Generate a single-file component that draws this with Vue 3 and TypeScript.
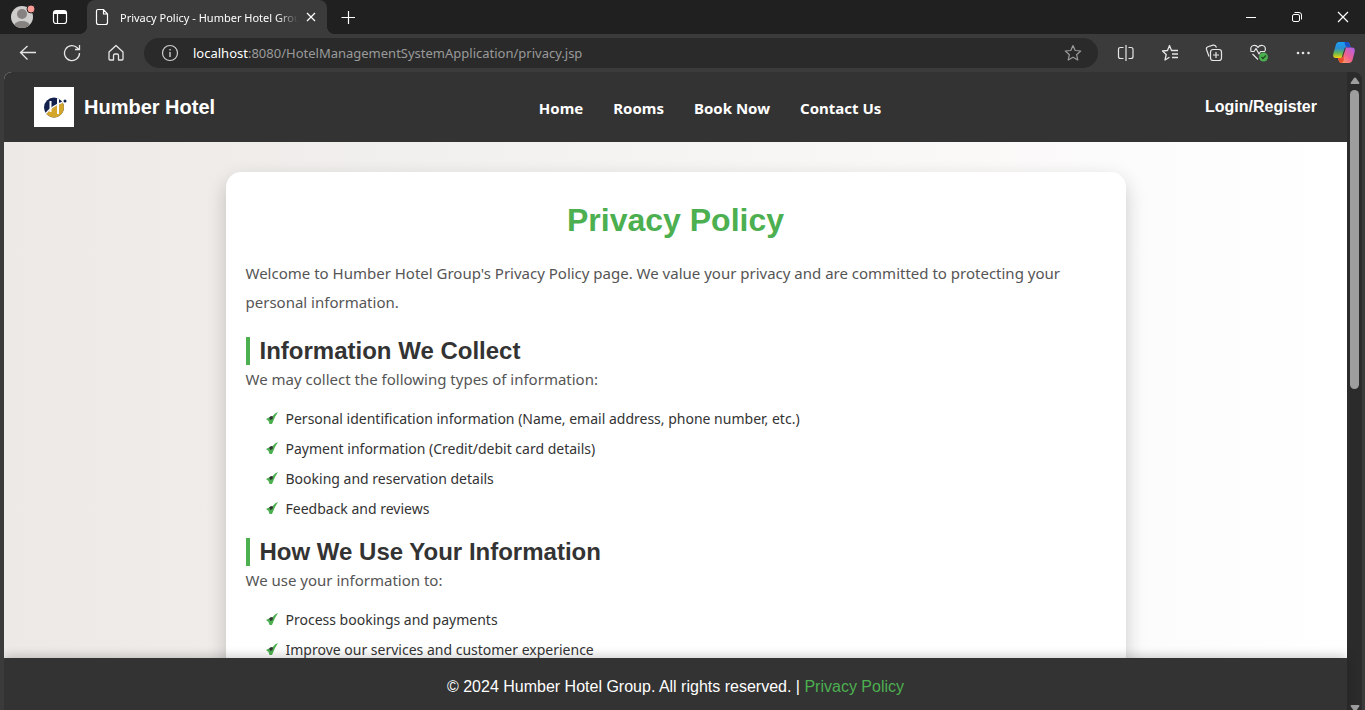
<script setup lang="ts">
interface PolicySection {
  title: string
  intro: string
  items: string[]
}

const navLinks: string[] = ['Home', 'Rooms', 'Book Now', 'Contact Us']

const sections: PolicySection[] = [
  {
    title: 'Information We Collect',
    intro: 'We may collect the following types of information:',
    items: [
      'Personal identification information (Name, email address, phone number, etc.)',
      'Payment information (Credit/debit card details)',
      'Booking and reservation details',
      'Feedback and reviews',
    ],
  },
  {
    title: 'How We Use Your Information',
    intro: 'We use your information to:',
    items: ['Process bookings and payments', 'Improve our services and customer experience'],
  },
]
</script>

<template>
  <div class="window">
    <div class="titlebar">
      <button class="icon-btn profile" aria-label="Profile">
        <svg width="26" height="26" viewBox="0 0 26 26">
          <defs><clipPath id="avatar"><circle cx="12" cy="13" r="11" /></clipPath></defs>
          <g clip-path="url(#avatar)">
            <rect width="26" height="26" fill="#cfcdcb" />
            <circle cx="12" cy="10" r="5" fill="#85827f" />
            <ellipse cx="12" cy="22" rx="8" ry="5" fill="#85827f" />
          </g>
          <circle cx="21" cy="5" r="4" fill="#ff9c96" stroke="#222" stroke-width="1" />
        </svg>
      </button>
      <button class="icon-btn workspaces" aria-label="Tab actions">
        <svg width="16" height="16" viewBox="0 0 16 16" fill="none" stroke="#fff" stroke-width="1.200">
          <rect x="1.500" y="1.500" width="13" height="13" rx="2.500" />
          <path d="M2 3.500H14" stroke-width="3" />
          <path d="M5.500 5V14.500" />
        </svg>
      </button>
      <div class="tab">
        <svg width="14" height="18" viewBox="0 0 14 18" fill="none" stroke="#fff" stroke-width="1.200">
          <path d="M3 1.500H8.500L12.500 6V14.500Q12.500 16.500 10.500 16.500H3.500Q1.500 16.500 1.500 14.500V3Q1.500 1.500 3 1.500ZM8.500 1.500V6H12.500" />
        </svg>
        <span class="tab-title">Privacy Policy - Humber Hotel Group</span>
        <button class="icon-btn" aria-label="Close tab">
          <svg width="10" height="10" viewBox="0 0 10 10" stroke="#fff" stroke-width="1.200"><path d="M1 1L9 9M9 1L1 9" /></svg>
        </button>
      </div>
      <button class="icon-btn new-tab" aria-label="New tab">
        <svg width="16" height="16" viewBox="0 0 16 16" stroke="#fff" stroke-width="1.200"><path d="M1.500 8.500H15M8.500 2V15" /></svg>
      </button>
      <div class="window-controls">
        <button class="icon-btn" aria-label="Minimize">
          <svg width="12" height="12" viewBox="0 0 12 12" stroke="#fff"><path d="M1 6.500H11" /></svg>
        </button>
        <button class="icon-btn" aria-label="Restore">
          <svg width="12" height="12" viewBox="0 0 12 12" fill="none" stroke="#fff">
            <rect x="1.500" y="3.500" width="7" height="7" rx="1.500" />
            <path d="M3.500 1.500H8Q10.500 1.500 10.500 4V8.500" />
          </svg>
        </button>
        <button class="icon-btn" aria-label="Close">
          <svg width="12" height="12" viewBox="0 0 12 12" stroke="#fff" stroke-width="1.200"><path d="M1 1L11 11M11 1L1 11" /></svg>
        </button>
      </div>
    </div>

    <div class="toolbar">
      <div class="nav-buttons">
        <button class="icon-btn" aria-label="Back">
          <svg width="18" height="18" viewBox="0 0 18 18" fill="none" stroke="#e6e6e6" stroke-width="1.300"><path d="M17 8.500H1.500M8.500 2L1.500 8.500L8.500 15.500" /></svg>
        </button>
        <button class="icon-btn" aria-label="Refresh">
          <svg width="18" height="18" viewBox="0 0 18 18" fill="none" stroke="#e6e6e6" stroke-width="1.300"><path d="M16.500 9A7.500 7.500 0 1 1 14.500 4L16 5.500M16.500 1V5.500H12" /></svg>
        </button>
        <button class="icon-btn" aria-label="Home">
          <svg width="18" height="18" viewBox="0 0 18 18" fill="none" stroke="#e6e6e6" stroke-width="1.300" stroke-linejoin="round"><path d="M2 8L9 1.500L16 8V15Q16 16 15 16H11.500V11.500Q11.500 10 10 10H8Q6.500 10 6.500 11.500V16H3Q2 16 2 15Z" /></svg>
        </button>
      </div>
      <div class="address">
        <svg width="18" height="18" viewBox="0 0 18 18" fill="none" stroke="#cfcfcf" stroke-width="1.200">
          <circle cx="9" cy="9" r="7.500" /><path d="M9 8V13M9 5V6.500" stroke-width="1.400" />
        </svg>
        <span class="url"><b>localhost</b>:8080/HotelManagementSystemApplication/privacy.jsp</span>
        <button class="icon-btn" aria-label="Add to favorites">
          <svg width="18" height="18" viewBox="0 0 18 18" fill="none" stroke="#9a9a9a" stroke-width="1.200" stroke-linejoin="round"><path d="M9 1.500L11.200 6.500L16.700 7L12.600 10.700L13.800 16L9 13.200L4.200 16L5.400 10.700L1.300 7L6.800 6.500Z" /></svg>
        </button>
      </div>
      <div class="tools">
        <button class="icon-btn" aria-label="Split screen">
          <svg width="18" height="18" viewBox="0 0 18 18" fill="none" stroke="#e6e6e6" stroke-width="1.200"><path d="M6.500 3.500H3.500Q1.500 3.500 1.500 5.500V12.500Q1.500 14.500 3.500 14.500H6.500M11.500 3.500H14Q16 3.500 16 5.500V12.500Q16 14.500 14 14.500H11.500M9 1V17" /></svg>
        </button>
        <button class="icon-btn" aria-label="Favorites">
          <svg width="18" height="18" viewBox="0 0 18 18" fill="none" stroke="#e6e6e6" stroke-width="1.300" stroke-linejoin="round"><path d="M12 6.500H10.500L8.500 1.500L6.500 6.500L1.500 7L5.200 10.500L4 16L8.500 13.200M10.500 6.500H17M11 10H17M11 13.500H17" /></svg>
        </button>
        <button class="icon-btn" aria-label="Collections">
          <svg width="18" height="18" viewBox="0 0 18 18" fill="none" stroke="#e6e6e6" stroke-width="1.200"><rect x="5.500" y="5.500" width="11" height="11" rx="2.500" /><path d="M8 11H14M11 8V14M4 12.500L1.500 5.500Q1 3.500 3 2.800L8 1.200Q10.500 .7 11.500 3.500" /></svg>
        </button>
        <button class="icon-btn" aria-label="Browser essentials">
          <svg width="20" height="20" viewBox="0 0 20 20" fill="none" stroke="#e6e6e6" stroke-width="1.200" stroke-linejoin="round">
            <path d="M2 8Q.8 3.500 4.500 2.500Q7.500 2 9 4.500Q10.500 2 13.500 2.500Q17.500 3.500 16 8M3.500 11L9 16.500M1.500 8.500H5L7 5.500L10 11L11.500 8.500H16" />
            <circle cx="14.500" cy="14" r="4.500" fill="#4caf50" stroke="none" /><path d="M12.500 14L14 15.500L17 12.500" stroke="#1f4a22" />
          </svg>
        </button>
        <button class="icon-btn" aria-label="Settings and more">
          <svg width="18" height="18" viewBox="0 0 18 18" fill="#e6e6e6"><circle cx="3" cy="9" r="1.300" /><circle cx="8" cy="9" r="1.300" /><circle cx="13.500" cy="9" r="1.300" /></svg>
        </button>
      </div>
      <button class="icon-btn copilot" aria-label="Copilot">
        <svg width="24" height="22" viewBox="0 0 24 22">
          <defs>
            <linearGradient id="cool" x1="0" y1="0" x2="0" y2="1"><stop offset="0" stop-color="#18a0f8" /><stop offset=".4" stop-color="#2c8ed0" /><stop offset=".7" stop-color="#68b850" /><stop offset="1" stop-color="#f8d010" /></linearGradient>
            <linearGradient id="warm" x1="1" y1="0" x2="0" y2="1"><stop offset="0" stop-color="#a860f0" /><stop offset=".5" stop-color="#f06090" /><stop offset="1" stop-color="#ffb050" /></linearGradient>
          </defs>
          <path d="M7 0H15Q17.500 0 18.500 5H15Q13 5 12.300 7L9.500 16H4Q0 16 1.500 11L3.500 4Q4.500 0 7 0Z" fill="url(#cool)" />
          <path d="M12.500 0H15.500Q17.500 0 18.500 5.500H15Q12.500 3 12.500 0Z" fill="#1c50c8" />
          <path d="M17 21H9.500Q7 21 6 16H8.500Q10.500 16 11.300 14L14 5.500H19.500Q24 5.500 22.500 10.500L20.500 18Q19.500 21 17 21Z" fill="url(#warm)" />
          <path d="M6 16H8.500Q10.500 16 11.300 14L11.800 12.500V18Q11 21 9.500 21Q7 21 6 16Z" fill="#e8502c" />
        </svg>
      </button>
    </div>

    <div class="viewport">
      <div class="page">
        <header class="site-header">
          <a class="brand" href="#">
            <svg class="logo" width="40" height="40" viewBox="0 0 40 40">
              <defs><clipPath id="disc"><circle cx="20" cy="20.500" r="10" /></clipPath></defs>
              <rect width="40" height="40" fill="#fff" />
              <g clip-path="url(#disc)">
                <rect x="10" y="10" width="20" height="21" fill="#14214d" />
                <path d="M9 31Q17 19 31 15V32H9Z" fill="#d4a72c" />
                <path d="M10 29Q17 18.500 31 14.500" fill="none" stroke="#fff" stroke-width="1.500" />
                <path d="M16.500 14V25M24 11V27" stroke="#fff" stroke-width="2" />
              </g>
              <circle cx="31" cy="14" r="1.500" fill="#14214d" />
            </svg>
            <span>Humber Hotel</span>
          </a>
          <nav class="site-nav">
            <a v-for="link in navLinks" :key="link" href="#">{{ link }}</a>
          </nav>
          <a class="login" href="#">Login/Register</a>
        </header>

        <main class="content">
          <article class="card">
            <h1>Privacy Policy</h1>
            <p>
              Welcome to Humber Hotel Group's Privacy Policy page. We value your privacy and are committed to
              protecting your personal information.
            </p>
            <section v-for="section in sections" :key="section.title">
              <h2>{{ section.title }}</h2>
              <p>{{ section.intro }}</p>
              <ul>
                <li v-for="item in section.items" :key="item">
                  <svg width="12" height="14" viewBox="0 0 12 14">
                    <path d="M0 8L3 6.500L4.500 7.500L9 2.500L12 1L9 6L6 13H3.500L2.500 10Z" fill="#4caf50" />
                    <path d="M3 6.500L5 5L7 5.500L6.500 8L4.500 9Z" fill="#333" />
                  </svg>
                  <span>{{ item }}</span>
                </li>
              </ul>
            </section>
          </article>
        </main>

        <footer class="site-footer">
          <p>© 2024 Humber Hotel Group. All rights reserved. | <a href="#">Privacy Policy</a></p>
        </footer>
      </div>
      <div class="scrollbar">
        <svg width="10" height="8" viewBox="0 0 10 8"><path d="M4 1Q5 0 6 1L9.500 6Q9.500 7 8.500 7H1.500Q.5 7 .5 6Z" fill="#9e9e9e" /></svg>
        <div class="thumb"></div>
        <svg class="down" width="10" height="8" viewBox="0 0 10 8"><path d="M4 7Q5 8 6 7L9.500 2Q9.500 1 8.500 1H1.500Q.5 1 .5 2Z" fill="#9e9e9e" /></svg>
      </div>
    </div>
  </div>
</template>

<style>
body {
  overflow: hidden;
}
</style>

<style scoped>
* {
  box-sizing: border-box;
}

.window {
  display: flex;
  flex-direction: column;
  height: 100vh;
  overflow: hidden;
  background: #3b3b3b;
  font-family: "Noto Sans", sans-serif;
}

.icon-btn {
  display: flex;
  align-items: center;
  justify-content: center;
  flex: none;
  padding: 0;
  border: 0;
  background: none;
}

.titlebar {
  display: flex;
  flex: none;
  height: 34px;
  padding-left: 10px;
  background: #202020;
}

.workspaces {
  margin: 0 19px 0 16px;
}

.tab {
  position: relative;
  display: flex;
  align-items: center;
  width: 240px;
  padding: 0 11px 0 8px;
  border-radius: 8px 8px 0 0;
  background: #3b3b3b;
  color: #fff;
}

.tab::before,
.tab::after {
  content: "";
  position: absolute;
  bottom: 0;
  width: 8px;
  height: 8px;
}

.tab::before {
  right: 100%;
  background: radial-gradient(circle at 0 0, #202020 8px, #3b3b3b 8px);
}

.tab::after {
  left: 100%;
  background: radial-gradient(circle at 100% 0, #202020 8px, #3b3b3b 8px);
}

.tab-title {
  flex: 1;
  overflow: hidden;
  margin: 0 8px 0 11px;
  font-size: 11px;
  white-space: nowrap;
  mask-image: linear-gradient(to right, #000 88%, transparent);
}

.new-tab {
  margin-left: 13px;
}

.window-controls {
  display: flex;
  gap: 34px;
  margin-left: auto;
  padding-right: 16px;
}

.toolbar {
  display: flex;
  align-items: center;
  flex: none;
  height: 38px;
  padding: 0 9px 0 19px;
}

.nav-buttons {
  display: flex;
  gap: 26px;
}

.address {
  display: flex;
  align-items: center;
  flex: 1;
  height: 30px;
  margin: 0 19px;
  padding: 0 16px 0 17px;
  border-radius: 15px;
  background: #2a2a2a;
}

.url {
  flex: 1;
  margin-left: 14px;
  color: #9a9a9a;
  font-size: 13px;
}

.url b {
  color: #fff;
  font-weight: 400;
}

.tools {
  display: flex;
  gap: 26px;
}

.copilot {
  margin-left: 19px;
}

.viewport {
  display: flex;
  flex: 1;
  min-height: 0;
  margin: 0 3px 0 4px;
  border-radius: 8px 8px 0 0;
  overflow: hidden;
}

.page {
  display: flex;
  flex-direction: column;
  flex: 1;
  min-width: 0;
  background: linear-gradient(to right, #ece9e6, #fff);
}

.site-header {
  display: flex;
  align-items: center;
  justify-content: space-between;
  flex: none;
  height: 70px;
  padding: 0 30px;
  background: #333;
  color: #fff;
  font-weight: 700;
}

.site-header a {
  color: #fff;
  text-decoration: none;
}

.brand {
  display: flex;
  align-items: center;
  gap: 10px;
  font-family: "Liberation Sans", Arial, sans-serif;
  font-size: 20px;
}

.site-nav {
  display: flex;
  gap: 30px;
  padding-top: 2px;
  font-size: 15px;
}

.login {
  font-family: "Liberation Sans", Arial, sans-serif;
  font-size: 16px;
}

.content {
  flex: 1;
  min-height: 0;
  overflow: hidden;
  padding: 30px 20px 0;
}

.card {
  max-width: 900px;
  min-height: 600px;
  margin: 0 auto;
  padding: 30px 20px;
  border-radius: 15px;
  background: #fff;
  box-shadow: 0 8px 20px rgba(0, 0, 0, 0.2);
  color: #555;
  font-size: 15px;
}

h1,
h2 {
  font-family: "Liberation Sans", Arial, sans-serif;
}

h1 {
  margin: 0 0 20px;
  color: #4caf50;
  font-size: 32px;
  line-height: 37px;
  text-align: center;
}

.card p {
  margin: 0;
  line-height: 29px;
}

h2 {
  margin: 20px 0 0;
  padding-left: 10px;
  border-left: 4px solid #4caf50;
  color: #333;
  font-size: 24px;
  line-height: 28px;
}

ul {
  margin: 9px 0 0;
  padding: 0 0 0 20px;
  list-style: none;
}

li {
  display: flex;
  align-items: center;
  gap: 8px;
  height: 30px;
  color: #333;
  font-size: 14px;
}

section + section h2 {
  margin-top: 15px;
}

.site-footer {
  position: relative;
  flex: none;
  padding: 20px 0 14px;
  background: #333;
  box-shadow: 0 -2px 10px rgba(0, 0, 0, 0.2);
  color: #fff;
  font-family: "Liberation Sans", Arial, sans-serif;
  font-size: 16px;
  line-height: 18px;
  text-align: center;
}

.site-footer p {
  margin: 0;
}

.site-footer a {
  color: #4caf50;
  text-decoration: none;
}

.scrollbar {
  display: flex;
  flex-direction: column;
  align-items: center;
  flex: none;
  width: 15px;
  padding-top: 5px;
  background: #2b2b2b;
}

.thumb {
  width: 9px;
  height: 299px;
  margin-top: 5px;
  border-radius: 5px;
  background: #9e9e9e;
}

.down {
  margin-top: auto;
  margin-bottom: -2px;
}
</style>
